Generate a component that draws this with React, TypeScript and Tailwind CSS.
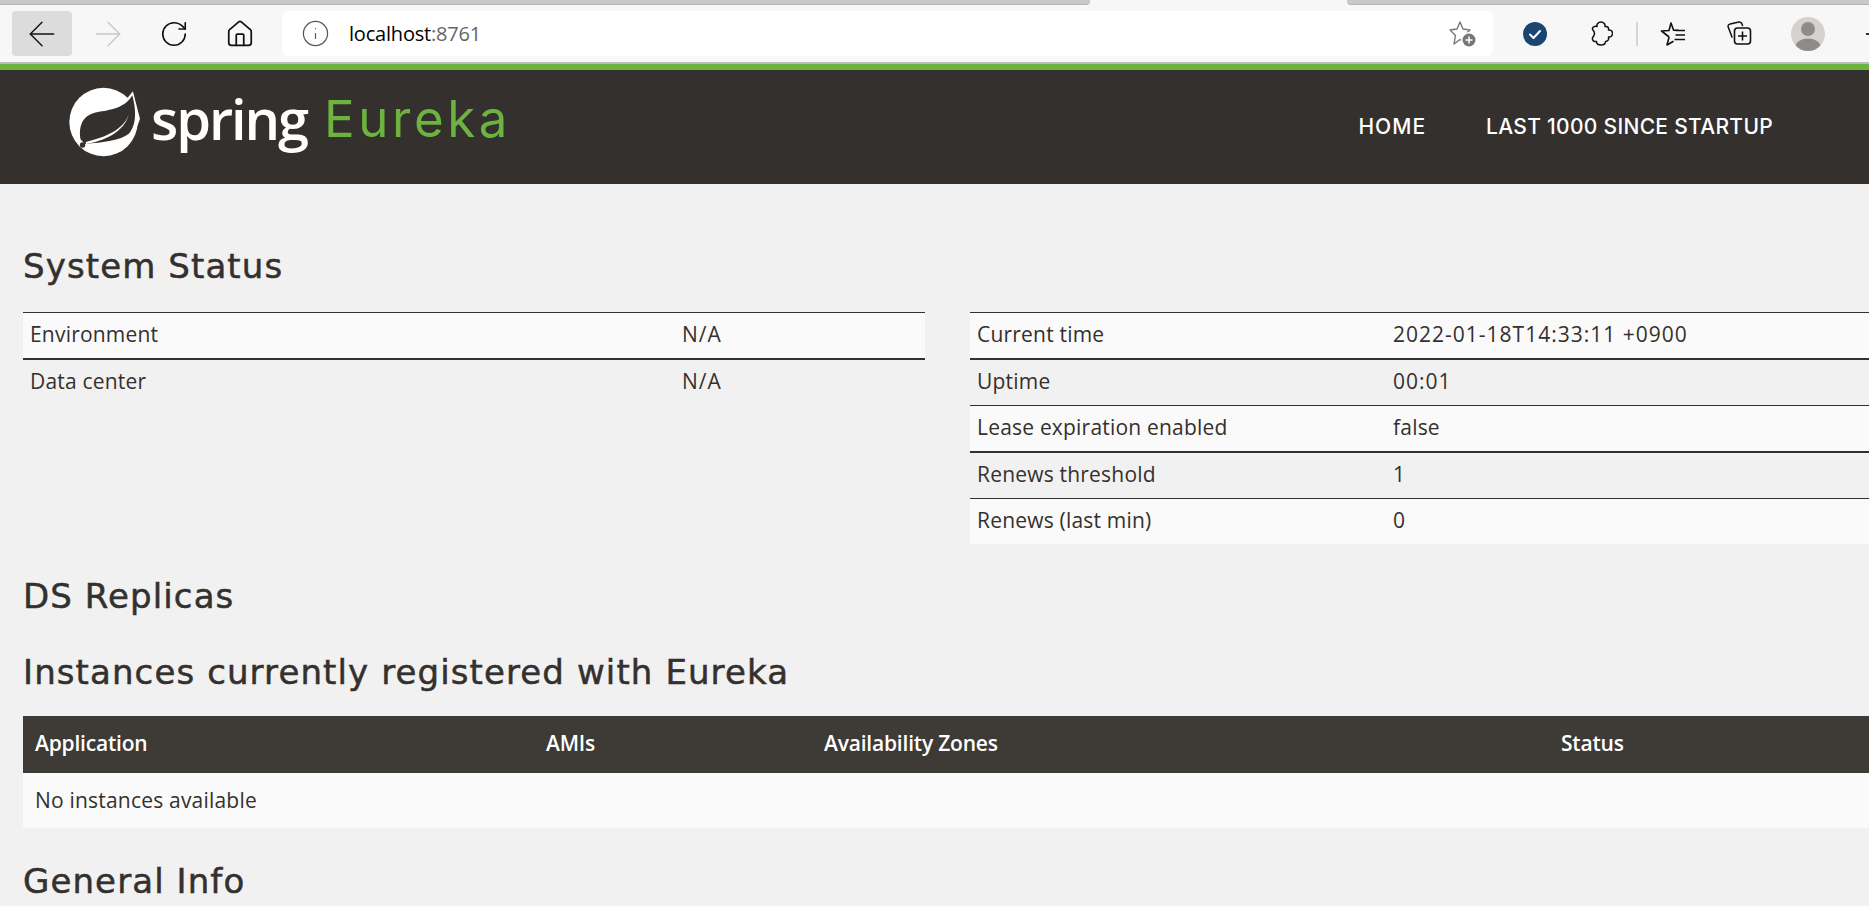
import { ArrowLeft, ArrowRight, RotateCw, Home, Info } from "lucide-react";

const heading = "font-['DejaVu_Sans',sans-serif] text-[34px] leading-[40px] text-[#34302d] tracking-[1.1px] [-webkit-text-stroke:0.5px_#34302d]";

function LeafLogo() {
  return (
    <svg width="71" height="70" viewBox="28 24 210 206" className="shrink-0">
      <circle cx="130" cy="127" r="101" fill="#fff" />
      <path d="M196 62L217 36L238 118L226 150Z" fill="#fff" />
      <path
        d="M62 178C55 130 75 105 110 98C150 92 195 85 215 48C224 80 232 130 205 162C180 182 130 188 75 192Z"
        fill="#34302d"
      />
      <path d="M78 192C125 184 195 160 206 98C197 142 150 168 78 186Z" fill="#fff" />
      <circle cx="68" cy="195" r="8" fill="#34302d" />
    </svg>
  );
}

function StarAdd() {
  return (
    <svg width="28" height="28" viewBox="0 0 28 28" fill="none">
      <path
        d="M11 2L14 9L21 10L15.5 15L17 23L11 19.5L5 24L6.5 15.5L1 10L8 9Z"
        stroke="#777"
        strokeWidth="1.4"
        strokeLinejoin="round"
      />
      <circle cx="20" cy="20" r="8" fill="#fff" />
      <circle cx="20" cy="20" r="6.5" fill="#777" />
      <path d="M20 16.5V23.5M16.5 20H23.5" stroke="#fff" strokeWidth="1.5" />
    </svg>
  );
}

function VerifiedBadge() {
  return (
    <svg width="24" height="24" viewBox="0 0 24 24" fill="none">
      <circle cx="12" cy="12" r="12" fill="#1a4571" />
      <path d="M7 12.5L10.5 16L17 9" stroke="#fff" strokeWidth="2" strokeLinecap="round" strokeLinejoin="round" />
    </svg>
  );
}

function ExtensionIcon() {
  return (
    <svg width="24" height="25" viewBox="0 0 24 25" fill="none">
      <path
        d="M8 5.5C7.5 3 9.5 1 12 1C14.5 1 16.5 3 16 5.5C18.5 5 20 6.5 19.5 9C22 8.5 23.5 10.5 23.5 12.5C23.5 14.5 22 16.5 19.5 16C20 18.5 19 20.5 16.5 20.5C16.5 23 14 24 12 24C10 24 7.5 23 7.5 20.5C5 21 3 19.5 3.5 17C3.7 15.5 5.5 15 5.5 12.5C5.5 10 3.7 9.5 3.5 8C3 6 5.5 5 8 5.5Z"
        stroke="#111"
        strokeWidth="1.5"
        strokeLinejoin="round"
      />
    </svg>
  );
}

function FavoritesIcon() {
  return (
    <svg width="26" height="26" viewBox="0 0 26 26" fill="none">
      <path
        d="M11 2L13.6 9.2H18M9 16.5L7 24L13 20.5M8.5 15.5L1.5 10L9 9.5L11 2"
        stroke="#111"
        strokeWidth="1.6"
        strokeLinejoin="round"
        strokeLinecap="round"
      />
      <path d="M15.5 9.5H25M15.5 14H25M14.5 18.5H25" stroke="#111" strokeWidth="1.6" />
    </svg>
  );
}

function CollectionsIcon() {
  return (
    <svg width="26" height="26" viewBox="0 0 26 26" fill="none">
      <path
        d="M6 16L2.2 6C1.8 4.5 2.5 3.5 4 3.1L13 1C14.5 0.8 15.5 1.5 16 3L16.5 4.5"
        stroke="#111"
        strokeWidth="1.5"
        strokeLinecap="round"
      />
      <rect x="8.5" y="7" width="16" height="16" rx="3" stroke="#111" strokeWidth="1.6" />
      <path d="M16.5 10.5V19.5M12 15H21" stroke="#111" strokeWidth="1.6" />
    </svg>
  );
}

function Avatar() {
  return (
    <svg width="34" height="34" viewBox="0 0 34 34">
      <defs>
        <clipPath id="avatar-clip">
          <circle cx="17" cy="17" r="17" />
        </clipPath>
      </defs>
      <circle cx="17" cy="17" r="17" fill="#d3d2ce" />
      <circle cx="17" cy="12" r="7" fill="#8f8b87" />
      <ellipse cx="17" cy="30" rx="12.5" ry="8.5" fill="#8f8b87" clipPath="url(#avatar-clip)" />
    </svg>
  );
}

function Row({ label, value, odd, labelClass, valueClass, thick }: { label: string; value: string; odd: boolean; labelClass: string; valueClass?: string; thick?: boolean }) {
  return (
    <div className={`flex h-[46.4px] items-center border-[#34302d] pb-[2px] ${thick ? "border-t-2" : "border-t"} ${odd ? "bg-[#fafafa]" : ""}`}>
      <div className={`pl-[7px] ${labelClass}`}>{label}</div>
      <div className={valueClass}>{value}</div>
    </div>
  );
}

export default function App() {
  return (
    <div className="h-[906px] w-[1869px] overflow-hidden bg-[#f1f1f1] font-['Open_Sans',sans-serif] text-[21px] tracking-[0.2px] text-[#34302d]">
      {/* browser chrome */}
      <div className="flex h-[5px] bg-[#f7f7f7]">
        <div className="w-[1090px] rounded-br-[4px] border-b border-[#b5b5b5] bg-[#c9c9c9]" />
        <div className="ml-auto w-[522px] rounded-bl-[4px] border-b border-[#b5b5b5] bg-[#c9c9c9]" />
      </div>
      <div className="flex h-[59px] items-center border-b-2 border-[#bdbdbd] bg-[#f7f7f7] pl-3">
        <div className="flex h-[45px] w-[60px] items-center justify-center rounded bg-[#dcdcdc]">
          <ArrowLeft size={40} strokeWidth={0.85} color="#111" />
        </div>
        <div className="ml-3 flex w-[48px] justify-center">
          <ArrowRight size={40} strokeWidth={0.85} color="#c8c8c8" />
        </div>
        <div className="ml-[18px] flex w-[48px] justify-center">
          <RotateCw size={30} strokeWidth={1.3} color="#111" />
        </div>
        <div className="ml-[18px] flex w-[48px] justify-center">
          <Home size={30} strokeWidth={1.4} color="#111" />
        </div>
        <div className="ml-[18px] flex h-[45px] w-[1211px] items-center rounded-md bg-white pl-[19px]">
          <Info size={29} strokeWidth={1} color="#555" />
          <span className="ml-[19px] text-[20px] tracking-[-0.2px] text-black">
            localhost<span className="text-[#666]">:8761</span>
          </span>
          <div className="ml-auto mr-[16px] flex">
            <StarAdd />
          </div>
        </div>
        <div className="ml-[30px] flex">
          <VerifiedBadge />
        </div>
        <div className="ml-[42px] flex">
          <ExtensionIcon />
        </div>
        <div className="ml-[23px] h-[24px] w-[2px] bg-[#d5d5d5]" />
        <div className="ml-[22px] flex">
          <FavoritesIcon />
        </div>
        <div className="ml-[40px] flex">
          <CollectionsIcon />
        </div>
        <div className="ml-[39px] flex">
          <Avatar />
        </div>
        <div className="ml-[41px] h-[2px] w-[3px] bg-[#333]" />
      </div>

      {/* spring header */}
      <div className="h-[6px] bg-[#6db33f]" />
      <div className="flex h-[114px] items-center bg-[#34302d]">
        <div className="ml-[69px] flex -translate-y-[5px] items-center">
          <LeafLogo />
          <span className="mb-[8px] ml-[11px] font-['Open_Sans',sans-serif] text-[56px] leading-none font-semibold tracking-[-2.1px] text-white">spring</span>
          <span className="mb-[8px] ml-[17px] font-['Inter',sans-serif] text-[51px] leading-none tracking-[3.6px] text-[#6db33f]">Eureka</span>
        </div>
        <div className="ml-auto mr-[96px] flex gap-[60px] font-['Inter',sans-serif] text-[21px] font-medium tracking-[0.3px] text-white">
          <span className="tracking-[1px]">HOME</span>
          <span>LAST 1000 SINCE STARTUP</span>
        </div>
      </div>

      <div className="pl-[23px]">
        <h1 className={`mt-[62px] ${heading}`}>System Status</h1>
        <div className="mt-[26px] flex gap-[45px]">
          <div className="w-[902px]">
            <Row label="Environment" value="N/A" odd labelClass="w-[659px]" valueClass="tracking-[1px]" />
            <Row label="Data center" value="N/A" odd={false} thick labelClass="w-[659px]" valueClass="tracking-[1px]" />
          </div>
          <div className="w-[899px]">
            <Row label="Current time" value="2022-01-18T14:33:11 +0900" odd labelClass="w-[423px]" valueClass="tracking-[1px]" />
            <Row label="Uptime" value="00:01" odd={false} thick labelClass="w-[423px]" valueClass="tracking-[1px]" />
            <Row label="Lease expiration enabled" value="false" odd labelClass="w-[423px]" />
            <Row label="Renews threshold" value="1" odd={false} thick labelClass="w-[423px]" />
            <Row label="Renews (last min)" value="0" odd labelClass="w-[423px]" />
          </div>
        </div>
        <h1 className={`mt-[32px] ${heading}`}>DS Replicas</h1>
        <h1 className={`mt-[36px] ${heading}`}>Instances currently registered with Eureka</h1>
        <div className="mt-[24px]">
          <div className="flex h-[57px] items-center bg-[#3e3a36] pb-[2px] pl-[12px] font-semibold tracking-[-0.2px] text-white">
            <div className="w-[511px]">Application</div>
            <div className="w-[278px]">AMIs</div>
            <div className="w-[737px]">Availability Zones</div>
            <div>Status</div>
          </div>
          <div className="flex h-[55px] items-center bg-[#fafafa] pl-[12px]">No instances available</div>
        </div>
        <h1 className={`mt-[33px] ${heading}`}>General Info</h1>
      </div>
    </div>
  );
}
